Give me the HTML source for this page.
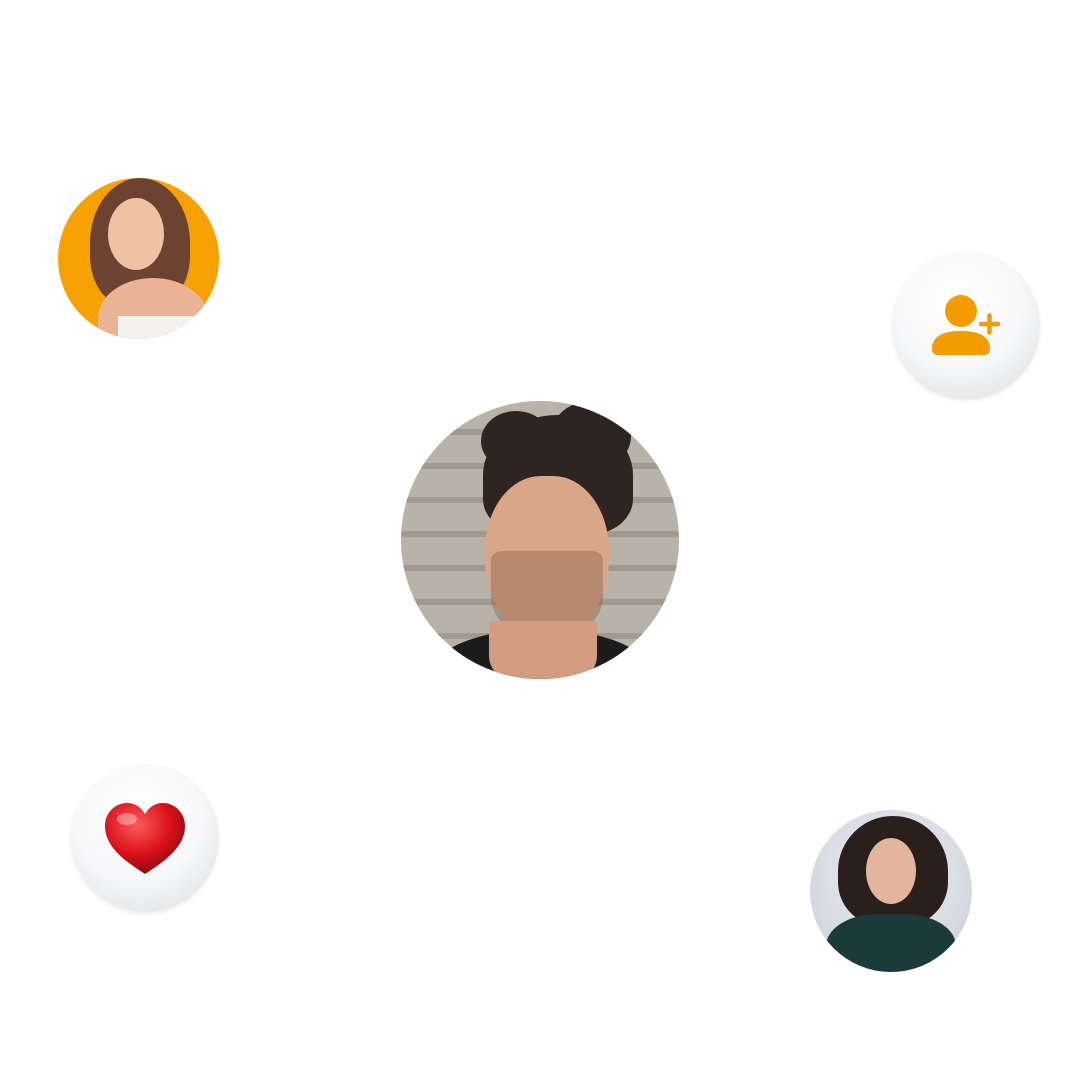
<!DOCTYPE html>
<html><head><meta charset="utf-8"><style>
html,body{margin:0;padding:0;background:#fff;width:1080px;height:1080px;overflow:hidden;position:relative;font-family:"Liberation Sans",sans-serif}
.c{position:absolute;border-radius:50%;overflow:hidden}
.btn{position:absolute;border-radius:50%;background:radial-gradient(circle at 45% 35%,#ffffff 0%,#f7f8f9 50%,#e4e6e8 80%,#c9cbce 100%);box-shadow:0 2px 4px rgba(0,0,0,.08)}
</style></head><body>

<div class="c" style="left:58px;top:178px;width:161px;height:161px;background:#f6a100">
  <div style="position:absolute;left:32px;top:0;width:100px;height:130px;border-radius:50% 50% 40% 40%;background:#6b4330"></div>
  <div style="position:absolute;left:50px;top:20px;width:56px;height:72px;border-radius:50%;background:#f0c2a4"></div>
  <div style="position:absolute;left:40px;top:100px;width:110px;height:80px;border-radius:50% 50% 0 0;background:#eab393"></div>
  <div style="position:absolute;left:60px;top:138px;width:90px;height:30px;background:#f4f2f0"></div>
</div>

<div class="btn" style="left:892px;top:251px;width:148px;height:148px">
  <svg width="148" height="148" viewBox="0 0 148 148" style="position:absolute;left:0;top:0">
    <circle cx="69" cy="60" r="16" fill="#f39c00"/>
    <path d="M40 98 Q40 80 69 80 Q98 80 98 98 Q98 104 92 104 H46 Q40 104 40 98 Z" fill="#f39c00"/>
    <path d="M89 73 H106 M97.5 64.5 V81.5" stroke="#f39c00" stroke-width="4.5" stroke-linecap="round"/>
  </svg>
</div>

<div class="c" style="left:401px;top:401px;width:278px;height:278px;background:repeating-linear-gradient(180deg,#b8b2a8 0 28px,#9f998f 28px 34px)">
  <div style="position:absolute;left:82px;top:14px;width:150px;height:120px;border-radius:50% 50% 30% 30%;background:#2e2520"></div>
  <div style="position:absolute;left:84px;top:75px;width:124px;height:165px;border-radius:45% 45% 50% 50%;background:#d9a688"></div>
  <div style="position:absolute;left:90px;top:150px;width:112px;height:90px;border-radius:10% 10% 50% 50%;background:rgba(120,85,65,.35)"></div>
  <div style="position:absolute;left:30px;top:228px;width:220px;height:90px;border-radius:50% 50% 0 0;background:#1c1c1c"></div>
  <div style="position:absolute;left:88px;top:220px;width:108px;height:70px;border-radius:0 0 50% 50%;background:#d19c80"></div>
  <div style="position:absolute;left:80px;top:10px;width:70px;height:60px;border-radius:50%;background:#2e2520"></div>
  <div style="position:absolute;left:150px;top:0px;width:80px;height:70px;border-radius:50%;background:#2e2520"></div>
</div>

<div class="btn" style="left:71px;top:764px;width:148px;height:148px">
  <svg width="148" height="148" viewBox="0 0 148 148" style="position:absolute;left:0;top:0">
    <defs><radialGradient id="h" cx="40%" cy="30%" r="70%"><stop offset="0" stop-color="#ff5a5a"/><stop offset=".6" stop-color="#d9121b"/><stop offset="1" stop-color="#8e0a10"/></radialGradient></defs>
    <path d="M74 110 C52 96 34 82 34 62 C34 48 45 39 56 39 C64 39 70 43 74 50 C78 43 84 39 92 39 C103 39 114 48 114 62 C114 82 96 96 74 110 Z" fill="url(#h)"/>
    <ellipse cx="56" cy="55" rx="10" ry="6" fill="#fff" opacity=".35"/>
  </svg>
</div>

<div class="c" style="left:810px;top:810px;width:162px;height:162px;background:radial-gradient(circle at 50% 40%,#eef0f5,#c9ccd6)">
  <div style="position:absolute;left:28px;top:6px;width:110px;height:110px;border-radius:50% 50% 40% 40%;background:#2a1f1b"></div>
  <div style="position:absolute;left:56px;top:28px;width:50px;height:66px;border-radius:50%;background:#e3b59c"></div>
  <div style="position:absolute;left:16px;top:104px;width:130px;height:80px;border-radius:40% 40% 0 0;background:#1d3a3a"></div>
</div>

</body></html>
